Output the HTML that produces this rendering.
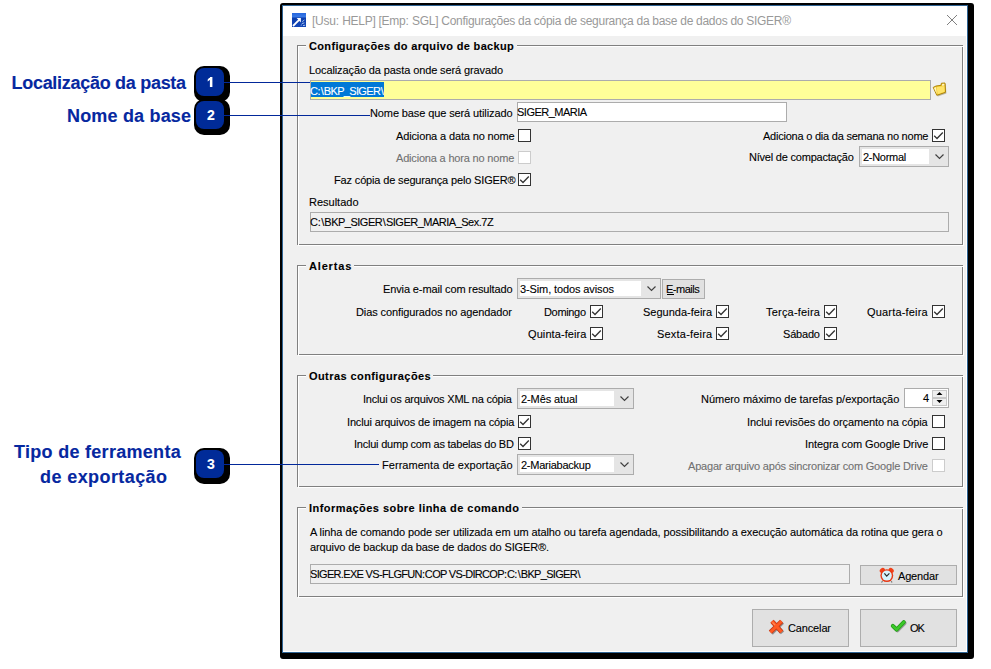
<!DOCTYPE html><html><head><meta charset="utf-8"><style>
*{margin:0;padding:0;box-sizing:border-box}
html,body{width:991px;height:669px;overflow:hidden;background:#fff;position:relative}
.a{position:absolute}
.t{position:absolute;font-family:'Liberation Sans',sans-serif;line-height:24px;white-space:pre;-webkit-text-stroke:0.1px currentColor}
.grp{position:absolute;border-top:1px solid #a0a0a0;border-left:1px solid #a0a0a0;border-right:1px solid #fff;border-bottom:1px solid #fff}
.grpi{position:absolute;border-top:1px solid #fff;border-left:1px solid #fff;border-right:1px solid #a0a0a0;border-bottom:1px solid #a0a0a0}
.gt{position:absolute;background:#f0f0f0;height:3px}
.cb{position:absolute;width:13px;height:13px;border:1px solid #333;background:#fff}
.cbd{border-color:#ccc}
.ed{position:absolute;border:1px solid #acacac}
.cmb{position:absolute;border:1px solid #acacac;background:#e5e5e5}
.btn{position:absolute;border:1px solid #adadad;background:#e1e1e1}
.ln{position:absolute;background:#02289a;height:1px}
.badge{position:absolute;width:36px;height:36px;background:#000;border-radius:10px}
.badgei{position:absolute;width:28px;height:28px;background:#002b98;border-radius:8px}
</style></head><body><div class="badge" style="left:194px;top:66px"></div>
<div class="badgei" style="left:196px;top:68px"></div>
<div class="badge" style="left:194px;top:99px"></div>
<div class="badgei" style="left:196px;top:101px"></div>
<div class="badge" style="left:194px;top:448px"></div>
<div class="badgei" style="left:196px;top:450px"></div>
<div class="a" style="left:280px;top:3px;width:694px;height:656px;background:#000;border-radius:3px"></div>
<div class="a" style="left:282px;top:5px;width:686px;height:648px;background:#2f6494"></div>
<div class="a" style="left:283px;top:6px;width:684px;height:646px;background:#fff"></div>
<div class="a" style="left:283px;top:36px;width:683px;height:615px;background:#f0f0f0"></div>
<svg class="a" style="left:292px;top:13px" width="14" height="14" viewBox="0 0 14 14">
<defs><linearGradient id="ig" x1="0" y1="0" x2="0" y2="1"><stop offset="0" stop-color="#2566de"/><stop offset="0.28" stop-color="#3b7ae6"/><stop offset="0.36" stop-color="#0c3eac"/><stop offset="1" stop-color="#1346b8"/></linearGradient></defs>
<rect width="14" height="14" fill="url(#ig)"/>
<path d="M1 13 L7.4 6.6" stroke="#fff" stroke-width="1.8"/>
<path d="M4.6 5.1 L8.9 5.1 L8.9 9.4 Z" fill="#fff"/>
<path d="M10.2 8.6 l2.2 -1.6 M9.8 10.6 l2.6 -0.8 M11 12.6 l2.2 -0.4 M8.8 12.4 l1 -0.6" stroke="#b8cff0" stroke-width="0.9"/>
</svg>
<svg class="a" style="left:946px;top:14px" width="12" height="12" viewBox="0 0 12 12"><path d="M1 1 L11 11 M11 1 L1 11" stroke="#808080" stroke-width="1"/></svg>
<div class="a" style="left:297px;top:45px;width:666px;height:1px;background:#808080"></div>
<div class="a" style="left:297px;top:244px;width:666px;height:1px;background:#808080"></div>
<div class="a" style="left:297px;top:45px;width:1px;height:200px;background:#808080"></div>
<div class="a" style="left:962px;top:45px;width:1px;height:200px;background:#808080"></div>
<div class="a" style="left:298px;top:46px;width:666px;height:1px;background:#fff"></div>
<div class="a" style="left:298px;top:245px;width:666px;height:1px;background:#fff"></div>
<div class="a" style="left:298px;top:46px;width:1px;height:200px;background:#fff"></div>
<div class="a" style="left:963px;top:46px;width:1px;height:200px;background:#fff"></div>
<div class="gt" style="left:306px;top:44px;width:211px"></div>
<div class="a" style="left:297px;top:265px;width:666px;height:1px;background:#808080"></div>
<div class="a" style="left:297px;top:354px;width:666px;height:1px;background:#808080"></div>
<div class="a" style="left:297px;top:265px;width:1px;height:90px;background:#808080"></div>
<div class="a" style="left:962px;top:265px;width:1px;height:90px;background:#808080"></div>
<div class="a" style="left:298px;top:266px;width:666px;height:1px;background:#fff"></div>
<div class="a" style="left:298px;top:355px;width:666px;height:1px;background:#fff"></div>
<div class="a" style="left:298px;top:266px;width:1px;height:90px;background:#fff"></div>
<div class="a" style="left:963px;top:266px;width:1px;height:90px;background:#fff"></div>
<div class="gt" style="left:306px;top:264px;width:48px"></div>
<div class="a" style="left:297px;top:375px;width:666px;height:1px;background:#808080"></div>
<div class="a" style="left:297px;top:486px;width:666px;height:1px;background:#808080"></div>
<div class="a" style="left:297px;top:375px;width:1px;height:112px;background:#808080"></div>
<div class="a" style="left:962px;top:375px;width:1px;height:112px;background:#808080"></div>
<div class="a" style="left:298px;top:376px;width:666px;height:1px;background:#fff"></div>
<div class="a" style="left:298px;top:487px;width:666px;height:1px;background:#fff"></div>
<div class="a" style="left:298px;top:376px;width:1px;height:112px;background:#fff"></div>
<div class="a" style="left:963px;top:376px;width:1px;height:112px;background:#fff"></div>
<div class="gt" style="left:306px;top:374px;width:127px"></div>
<div class="a" style="left:297px;top:507px;width:666px;height:1px;background:#808080"></div>
<div class="a" style="left:297px;top:596px;width:666px;height:1px;background:#808080"></div>
<div class="a" style="left:297px;top:507px;width:1px;height:90px;background:#808080"></div>
<div class="a" style="left:962px;top:507px;width:1px;height:90px;background:#808080"></div>
<div class="a" style="left:298px;top:508px;width:666px;height:1px;background:#fff"></div>
<div class="a" style="left:298px;top:597px;width:666px;height:1px;background:#fff"></div>
<div class="a" style="left:298px;top:508px;width:1px;height:90px;background:#fff"></div>
<div class="a" style="left:963px;top:508px;width:1px;height:90px;background:#fff"></div>
<div class="gt" style="left:306px;top:506px;width:216px"></div>
<div class="ed" style="left:310px;top:80px;width:621px;height:20px;background:#ffff99"></div>
<div class="a" style="left:311px;top:82px;width:73px;height:15px;background:#0078d7"></div>
<svg class="a" style="left:932px;top:82px" width="15" height="15" viewBox="0 0 15 15">
<path d="M1.9 5.9 L4.2 4.6 L9.2 3.8 L9.6 1.6 L13.2 1.4 L13.8 10.8 L5.2 13.8 Z" fill="#5a4a10" opacity="0.35" transform="translate(0.6,0.6)"/>
<path d="M1.2 5.4 L4 4 L9 3.3 L9.4 1.2 L13 1 L13.5 10.3 L4.8 13.3 Z" fill="#f0c428" stroke="#a87e00" stroke-width="0.9" stroke-linejoin="round"/>
<path d="M4.6 5 L12.4 3.9 L12.7 9.7 L5.6 12.2 Z" fill="#ffe46a"/>
<path d="M1.9 5.9 L4 5 L4.9 12.2 Z" fill="#fff4b8"/>
<path d="M10.1 1.9 L12.3 1.8 L12.4 3.4 L10 3.7 Z" fill="#fff6c8"/>
</svg>
<div class="ed" style="left:517px;top:102px;width:270px;height:20px;background:#fff"></div>
<div class="cb" style="left:518px;top:129px"></div>
<div class="cb cbd" style="left:518px;top:151px"></div>
<div class="cb" style="left:518px;top:173px"></div>
<svg class="a" style="left:518px;top:173px" width="13" height="13" viewBox="0 0 13 13"><path d="M2.2 6.8 L5 9.5 L10.8 3.5" fill="none" stroke="#333" stroke-width="1.3"/></svg>
<div class="cb" style="left:932px;top:129px"></div>
<svg class="a" style="left:932px;top:129px" width="13" height="13" viewBox="0 0 13 13"><path d="M2.2 6.8 L5 9.5 L10.8 3.5" fill="none" stroke="#333" stroke-width="1.3"/></svg>
<div class="ed" style="left:310px;top:212px;width:639px;height:20px"></div>
<div class="cmb" style="left:859px;top:146px;width:90px;height:21px"></div>
<div class="a" style="left:862px;top:149px;width:67px;height:15px;background:#fff"></div>
<svg class="a" style="left:935px;top:154px" width="10" height="6" viewBox="0 0 10 6"><path d="M0.5 0.5 L4.5 4.5 L8.5 0.5" fill="none" stroke="#404040" stroke-width="1.15"/></svg>
<div class="cmb" style="left:517px;top:278px;width:144px;height:21px"></div>
<div class="a" style="left:520px;top:281px;width:121px;height:15px;background:#fff"></div>
<svg class="a" style="left:647px;top:286px" width="10" height="6" viewBox="0 0 10 6"><path d="M0.5 0.5 L4.5 4.5 L8.5 0.5" fill="none" stroke="#404040" stroke-width="1.15"/></svg>
<div class="cmb" style="left:517px;top:388px;width:117px;height:21px"></div>
<div class="a" style="left:520px;top:391px;width:94px;height:15px;background:#fff"></div>
<svg class="a" style="left:620px;top:396px" width="10" height="6" viewBox="0 0 10 6"><path d="M0.5 0.5 L4.5 4.5 L8.5 0.5" fill="none" stroke="#404040" stroke-width="1.15"/></svg>
<div class="cmb" style="left:517px;top:454px;width:117px;height:21px"></div>
<div class="a" style="left:520px;top:457px;width:94px;height:15px;background:#fff"></div>
<svg class="a" style="left:620px;top:462px" width="10" height="6" viewBox="0 0 10 6"><path d="M0.5 0.5 L4.5 4.5 L8.5 0.5" fill="none" stroke="#404040" stroke-width="1.15"/></svg>
<div class="btn" style="left:662px;top:279px;width:43px;height:20px"></div>
<div class="a" style="left:667px;top:294px;width:7px;height:1px;background:#000"></div>
<div class="cb" style="left:590px;top:305px"></div>
<svg class="a" style="left:590px;top:305px" width="13" height="13" viewBox="0 0 13 13"><path d="M2.2 6.8 L5 9.5 L10.8 3.5" fill="none" stroke="#333" stroke-width="1.3"/></svg>
<div class="cb" style="left:716px;top:305px"></div>
<svg class="a" style="left:716px;top:305px" width="13" height="13" viewBox="0 0 13 13"><path d="M2.2 6.8 L5 9.5 L10.8 3.5" fill="none" stroke="#333" stroke-width="1.3"/></svg>
<div class="cb" style="left:824px;top:305px"></div>
<svg class="a" style="left:824px;top:305px" width="13" height="13" viewBox="0 0 13 13"><path d="M2.2 6.8 L5 9.5 L10.8 3.5" fill="none" stroke="#333" stroke-width="1.3"/></svg>
<div class="cb" style="left:932px;top:305px"></div>
<svg class="a" style="left:932px;top:305px" width="13" height="13" viewBox="0 0 13 13"><path d="M2.2 6.8 L5 9.5 L10.8 3.5" fill="none" stroke="#333" stroke-width="1.3"/></svg>
<div class="cb" style="left:590px;top:327px"></div>
<svg class="a" style="left:590px;top:327px" width="13" height="13" viewBox="0 0 13 13"><path d="M2.2 6.8 L5 9.5 L10.8 3.5" fill="none" stroke="#333" stroke-width="1.3"/></svg>
<div class="cb" style="left:716px;top:327px"></div>
<svg class="a" style="left:716px;top:327px" width="13" height="13" viewBox="0 0 13 13"><path d="M2.2 6.8 L5 9.5 L10.8 3.5" fill="none" stroke="#333" stroke-width="1.3"/></svg>
<div class="cb" style="left:824px;top:327px"></div>
<svg class="a" style="left:824px;top:327px" width="13" height="13" viewBox="0 0 13 13"><path d="M2.2 6.8 L5 9.5 L10.8 3.5" fill="none" stroke="#333" stroke-width="1.3"/></svg>
<div class="cb" style="left:518px;top:415px"></div>
<svg class="a" style="left:518px;top:415px" width="13" height="13" viewBox="0 0 13 13"><path d="M2.2 6.8 L5 9.5 L10.8 3.5" fill="none" stroke="#333" stroke-width="1.3"/></svg>
<div class="cb" style="left:518px;top:437px"></div>
<svg class="a" style="left:518px;top:437px" width="13" height="13" viewBox="0 0 13 13"><path d="M2.2 6.8 L5 9.5 L10.8 3.5" fill="none" stroke="#333" stroke-width="1.3"/></svg>
<div class="cb" style="left:932px;top:415px"></div>
<div class="cb" style="left:932px;top:437px"></div>
<div class="cb cbd" style="left:932px;top:459px"></div>
<div class="ed" style="left:904px;top:388px;width:45px;height:20px;background:#fff"></div>
<div class="a" style="left:932px;top:390px;width:15px;height:16px;background:#efefef;border:1px solid #c8c8c8"></div>
<div class="a" style="left:933px;top:397px;width:13px;height:2px;background:#c8c8c8"></div>
<svg class="a" style="left:936px;top:391px" width="7" height="13" viewBox="0 0 7 13"><path d="M0.5 4 L3.5 1 L6.5 4 Z M0.5 9 L3.5 12 L6.5 9 Z" fill="#000"/></svg>
<div class="ed" style="left:310px;top:564px;width:540px;height:20px"></div>
<div class="btn" style="left:860px;top:565px;width:97px;height:20px"></div>
<svg class="a" style="left:878px;top:567px" width="17" height="16" viewBox="0 0 17 16">
<ellipse cx="4.3" cy="3.4" rx="2.8" ry="2.2" transform="rotate(-40 4.3 3.4)" fill="#f04018"/>
<ellipse cx="13.2" cy="3.4" rx="2.8" ry="2.2" transform="rotate(40 13.2 3.4)" fill="#f04018"/>
<circle cx="8.8" cy="8.6" r="6.4" fill="#e83814"/>
<circle cx="8.8" cy="8.6" r="5" fill="#d6f3fc"/>
<path d="M6.4 6.4 L8.7 9.1 L11.4 6.4" fill="none" stroke="#2a2a2a" stroke-width="1.2"/>
<path d="M4.6 14.4 l-1.2 1 M13 14.4 l1.2 1" stroke="#666" stroke-width="1.1"/>
</svg>
<div class="btn" style="left:752px;top:609px;width:97px;height:38px"></div>
<div class="btn" style="left:860px;top:609px;width:97px;height:38px"></div>
<svg class="a" style="left:764px;top:614px" width="26" height="26" viewBox="0 0 26 26">
<g transform="translate(0.9,0.9)" opacity="0.35"><path d="M8 7.3 L17.6 18 M17.6 7.3 L6.4 18.2" stroke="#000" stroke-width="4.4" stroke-linecap="butt"/></g>
<path d="M8 7.3 L17.6 18 M17.6 7.3 L6.4 18.2" stroke="#c83a18" stroke-width="4.6" stroke-linecap="butt"/>
<path d="M8 7.3 L17.6 18 M17.6 7.3 L6.4 18.2" stroke="#ff5a24" stroke-width="3" stroke-linecap="butt"/>
<path d="M8.5 8.3 L11 11" stroke="#ff8a5a" stroke-width="1.2"/>
</svg>
<svg class="a" style="left:886px;top:614px" width="26" height="26" viewBox="0 0 26 26">
<g transform="translate(0.9,0.9)" opacity="0.3"><path d="M6.8 11.8 L10.6 15.6 L17.8 8.2" fill="none" stroke="#000" stroke-width="3.8" stroke-linecap="round" stroke-linejoin="round"/></g>
<path d="M6.8 11.8 L10.6 15.6 L17.8 8.2" fill="none" stroke="#1f9a14" stroke-width="4" stroke-linecap="round" stroke-linejoin="round"/>
<path d="M6.8 11.8 L10.6 15.6 L17.8 8.2" fill="none" stroke="#3cc82a" stroke-width="2.6" stroke-linecap="round" stroke-linejoin="round"/>
</svg>
<div class="t" style="left:312px;top:9px;font-size:12px;font-weight:normal;color:#999;letter-spacing:-0.2857px;-webkit-text-stroke:0;">[Usu<span style="margin:0 0.4px 0 0.2px">:</span> HELP] [Emp<span style="margin:0 0.4px 0 0.2px">:</span> SGL] Configurações da cópia de segurança da base de dados do SIGER®</div>
<div class="t" style="left:309px;top:34px;font-size:11px;font-weight:bold;color:#000;letter-spacing:0.3333px;">Configurações do arquivo de backup</div>
<div class="t" style="left:309px;top:58px;font-size:11px;font-weight:normal;color:#000;letter-spacing:-0.1081px;">Localização da pasta onde será gravado</div>
<div class="t" style="left:370px;top:101px;font-size:11px;font-weight:normal;color:#000;letter-spacing:-0.1111px;">Nome base que será utilizado</div>
<div class="t" style="left:517px;top:100px;font-size:11px;font-weight:normal;color:#000;letter-spacing:-0.5px;">SIGER_MARIA</div>
<div class="t" style="left:396px;top:124px;font-size:11px;font-weight:normal;color:#000;letter-spacing:-0.1364px;">Adiciona a data no nome</div>
<div class="t" style="left:396px;top:146px;font-size:11px;font-weight:normal;color:#707070;letter-spacing:-0.1818px;">Adiciona a hora no nome</div>
<div class="t" style="left:334px;top:168px;font-size:11px;font-weight:normal;color:#000;letter-spacing:-0.1515px;">Faz cópia de segurança pelo SIGER®</div>
<div class="t" style="left:309px;top:190px;font-size:11px;font-weight:normal;color:#000;letter-spacing:0.0px;">Resultado</div>
<div class="t" style="left:310px;top:210px;font-size:11px;font-weight:normal;color:#000;letter-spacing:-0.5px;">C<span style="margin:0 0.4px 0 0.2px">:</span><span style="margin:0 0.6px">\</span>BKP_SIGER<span style="margin:0 0.6px">\</span>SIGER_MARIA_Sex.7Z</div>
<div class="t" style="left:763px;top:124px;font-size:11px;font-weight:normal;color:#000;letter-spacing:-0.2258px;">Adiciona o dia da semana no nome</div>
<div class="t" style="left:749px;top:145px;font-size:11px;font-weight:normal;color:#000;letter-spacing:-0.2105px;">Nível de compactação</div>
<div class="t" style="left:863px;top:145px;font-size:11px;font-weight:normal;color:#000;letter-spacing:-0.2857px;">2-Normal</div>
<div class="t" style="left:310px;top:79px;font-size:11px;font-weight:normal;color:#fff;letter-spacing:-0.6667px;">C<span style="margin:0 0.4px 0 0.2px">:</span><span style="margin:0 0.6px">\</span>BKP_SIGER<span style="margin:0 0.6px">\</span></div>
<div class="t" style="left:309px;top:254px;font-size:11px;font-weight:bold;color:#000;letter-spacing:0.8333px;">Alertas</div>
<div class="t" style="left:383px;top:277px;font-size:11px;font-weight:normal;color:#000;letter-spacing:-0.12px;">Envia e-mail com resultado</div>
<div class="t" style="left:520px;top:277px;font-size:11px;font-weight:normal;color:#000;letter-spacing:-0.1111px;">3-Sim, todos avisos</div>
<div class="t" style="left:666px;top:277px;font-size:11px;font-weight:normal;color:#000;letter-spacing:-0.5px;">E-mails</div>
<div class="t" style="left:356px;top:300px;font-size:11px;font-weight:normal;color:#000;letter-spacing:-0.1034px;">Dias configurados no agendador</div>
<div class="t" style="left:544px;top:300px;font-size:11px;font-weight:normal;color:#000;letter-spacing:-0.3333px;">Domingo</div>
<div class="t" style="left:643px;top:300px;font-size:11px;font-weight:normal;color:#000;letter-spacing:0.0px;">Segunda-feira</div>
<div class="t" style="left:766px;top:300px;font-size:11px;font-weight:normal;color:#000;letter-spacing:0.2px;">Terça-feira</div>
<div class="t" style="left:867px;top:300px;font-size:11px;font-weight:normal;color:#000;letter-spacing:0.1818px;">Quarta-feira</div>
<div class="t" style="left:528px;top:322px;font-size:11px;font-weight:normal;color:#000;letter-spacing:0.0909px;">Quinta-feira</div>
<div class="t" style="left:657px;top:322px;font-size:11px;font-weight:normal;color:#000;letter-spacing:0.2px;">Sexta-feira</div>
<div class="t" style="left:783px;top:322px;font-size:11px;font-weight:normal;color:#000;letter-spacing:-0.2px;">Sábado</div>
<div class="t" style="left:309px;top:364px;font-size:11px;font-weight:bold;color:#000;letter-spacing:0.4211px;">Outras configurações</div>
<div class="t" style="left:363px;top:387px;font-size:11px;font-weight:normal;color:#000;letter-spacing:-0.2px;">Inclui os arquivos XML na cópia</div>
<div class="t" style="left:521px;top:387px;font-size:11px;font-weight:normal;color:#000;letter-spacing:-0.1px;">2-Mês atual</div>
<div class="t" style="left:347px;top:410px;font-size:11px;font-weight:normal;color:#000;letter-spacing:-0.1515px;">Inclui arquivos de imagem na cópia</div>
<div class="t" style="left:354px;top:432px;font-size:11px;font-weight:normal;color:#000;letter-spacing:-0.2258px;">Inclui dump com as tabelas do BD</div>
<div class="t" style="left:382px;top:453px;font-size:11px;font-weight:normal;color:#000;letter-spacing:0.0435px;">Ferramenta de exportação</div>
<div class="t" style="left:521px;top:453px;font-size:11px;font-weight:normal;color:#000;letter-spacing:-0.25px;">2-Mariabackup</div>
<div class="t" style="left:701px;top:387px;font-size:11px;font-weight:normal;color:#000;letter-spacing:-0.0278px;">Número máximo de tarefas p/exportação</div>
<div class="t" style="left:923px;top:386px;font-size:11px;font-weight:normal;color:#000;letter-spacing:0px;">4</div>
<div class="t" style="left:747px;top:410px;font-size:11px;font-weight:normal;color:#000;letter-spacing:-0.1111px;">Inclui revisões do orçamento na cópia</div>
<div class="t" style="left:805px;top:432px;font-size:11px;font-weight:normal;color:#000;letter-spacing:-0.087px;">Integra com Google Drive</div>
<div class="t" style="left:688px;top:454px;font-size:11px;font-weight:normal;color:#707070;letter-spacing:-0.1915px;">Apagar arquivo após sincronizar com Google Drive</div>
<div class="t" style="left:309px;top:496px;font-size:11px;font-weight:bold;color:#000;letter-spacing:0.4545px;">Informações sobre linha de comando</div>
<div class="t" style="left:310px;top:520px;font-size:11px;font-weight:normal;color:#000;letter-spacing:-0.0945px;">A linha de comando pode ser utilizada em um atalho ou tarefa agendada, possibilitando a execução automática da rotina que gera o</div>
<div class="t" style="left:310px;top:535px;font-size:11px;font-weight:normal;color:#000;letter-spacing:-0.1136px;">arquivo de backup da base de dados do SIGER®.</div>
<div class="t" style="left:310px;top:562px;font-size:11px;font-weight:normal;color:#000;letter-spacing:-0.6739px;">SIGER.EXE VS-FLGFUN<span style="margin:0 0.4px 0 0.2px">:</span>COP VS-DIRCOP<span style="margin:0 0.4px 0 0.2px">:</span>C<span style="margin:0 0.4px 0 0.2px">:</span><span style="margin:0 0.6px">\</span>BKP_SIGER<span style="margin:0 0.6px">\</span></div>
<div class="t" style="left:898px;top:564px;font-size:11px;font-weight:normal;color:#000;letter-spacing:-0.1667px;">Agendar</div>
<div class="t" style="left:788px;top:616px;font-size:11px;font-weight:normal;color:#000;letter-spacing:-0.1429px;">Cancelar</div>
<div class="t" style="left:910px;top:616px;font-size:11px;font-weight:normal;color:#000;letter-spacing:-1.0px;">OK</div>
<div class="t" style="left:11.5px;top:71px;font-size:18px;font-weight:bold;color:#0628a0;letter-spacing:-0.2895px;">Localização da pasta</div>
<div class="t" style="left:67px;top:104px;font-size:18px;font-weight:bold;color:#0628a0;letter-spacing:0.1818px;">Nome da base</div>
<div class="t" style="left:14px;top:440px;font-size:18px;font-weight:bold;color:#0628a0;letter-spacing:0.2941px;">Tipo de ferramenta</div>
<div class="t" style="left:40px;top:465px;font-size:18px;font-weight:bold;color:#0628a0;letter-spacing:0.4167px;">de exportação</div>
<div class="ln" style="left:224px;top:82px;width:86px"></div>
<div class="ln" style="left:224px;top:115px;width:146px"></div>
<div class="ln" style="left:224px;top:464px;width:155px"></div>
<svg class="a" style="left:196px;top:68px" width="28" height="28" viewBox="0 0 28 28"><path d="M13.9 9 L16.4 9 L16.4 19 L13.9 19 Z M11.7 11.4 L14 9 L14.4 11.6 L11.7 13.4 Z" fill="#fff"/></svg>
<div class="t" style="left:197px;top:103px;width:28px;text-align:center;font-size:14px;font-weight:bold;color:#fff">2</div>
<div class="t" style="left:197px;top:452px;width:28px;text-align:center;font-size:14px;font-weight:bold;color:#fff">3</div></body></html>
